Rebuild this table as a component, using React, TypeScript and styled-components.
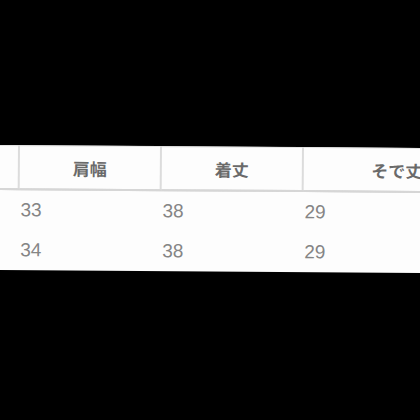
import React from "react";
import styled, { createGlobalStyle } from "styled-components";

const GlobalStyle = createGlobalStyle`
	html, body {
		margin: 0;
		padding: 0;
		background: #000;
		width: 420px;
		height: 420px;
		overflow: hidden;
	}
`;

const Screen = styled.div`
	width: 420px;
	height: 420px;
	background: #000;
	padding-top: 145px;
	box-sizing: border-box;
	overflow: hidden;
`;

const Sheet = styled.div`
	margin-left: -124px;
	width: 620px;
	background: #fdfdfd;
	transform: rotate(0.4deg);
	transform-origin: 124px 0;
`;

const Table = styled.table`
	border-collapse: collapse;
	table-layout: fixed;
	font-family: "Liberation Sans", "Noto Sans CJK JP", sans-serif;
`;

const Head = styled.th<{ w: number }>`
	width: ${(p) => p.w}px;
	height: 42px;
	padding: 0;
	border-top: 1px solid #e4e4e4;
	border-bottom: 2px solid #d6d6d6;
	border-left: 2px solid #dcdcdc;
	font-family: "Noto Sans CJK JP", sans-serif;
	font-size: 17px;
	font-weight: 700;
	color: #6a6a6a;
	text-align: center;
	vertical-align: middle;
	&:first-child {
		border-left: none;
	}
`;

const Cell = styled.td`
	height: 40px;
	padding: 0 0 0 2px;
	font-size: 19px;
	color: #858585;
	text-align: left;
	vertical-align: middle;
`;

const sizes = [
	{ shoulder: "33", length: "38", sleeve: "29" },
	{ shoulder: "34", length: "38", sleeve: "29" },
];

export default function App() {
	return (
		<>
			<GlobalStyle />
			<Screen>
				<Sheet>
					<Table>
						<thead>
							<tr>
								<Head w={142}></Head>
								<Head w={140}>肩幅</Head>
								<Head w={140}>着丈</Head>
								<Head w={186}>そで丈</Head>
							</tr>
						</thead>
						<tbody>
							{sizes.map((row, idx) => (
								<tr key={idx}>
									<Cell></Cell>
									<Cell>{row.shoulder}</Cell>
									<Cell>{row.length}</Cell>
									<Cell>{row.sleeve}</Cell>
								</tr>
							))}
						</tbody>
					</Table>
				</Sheet>
			</Screen>
		</>
	);
}
